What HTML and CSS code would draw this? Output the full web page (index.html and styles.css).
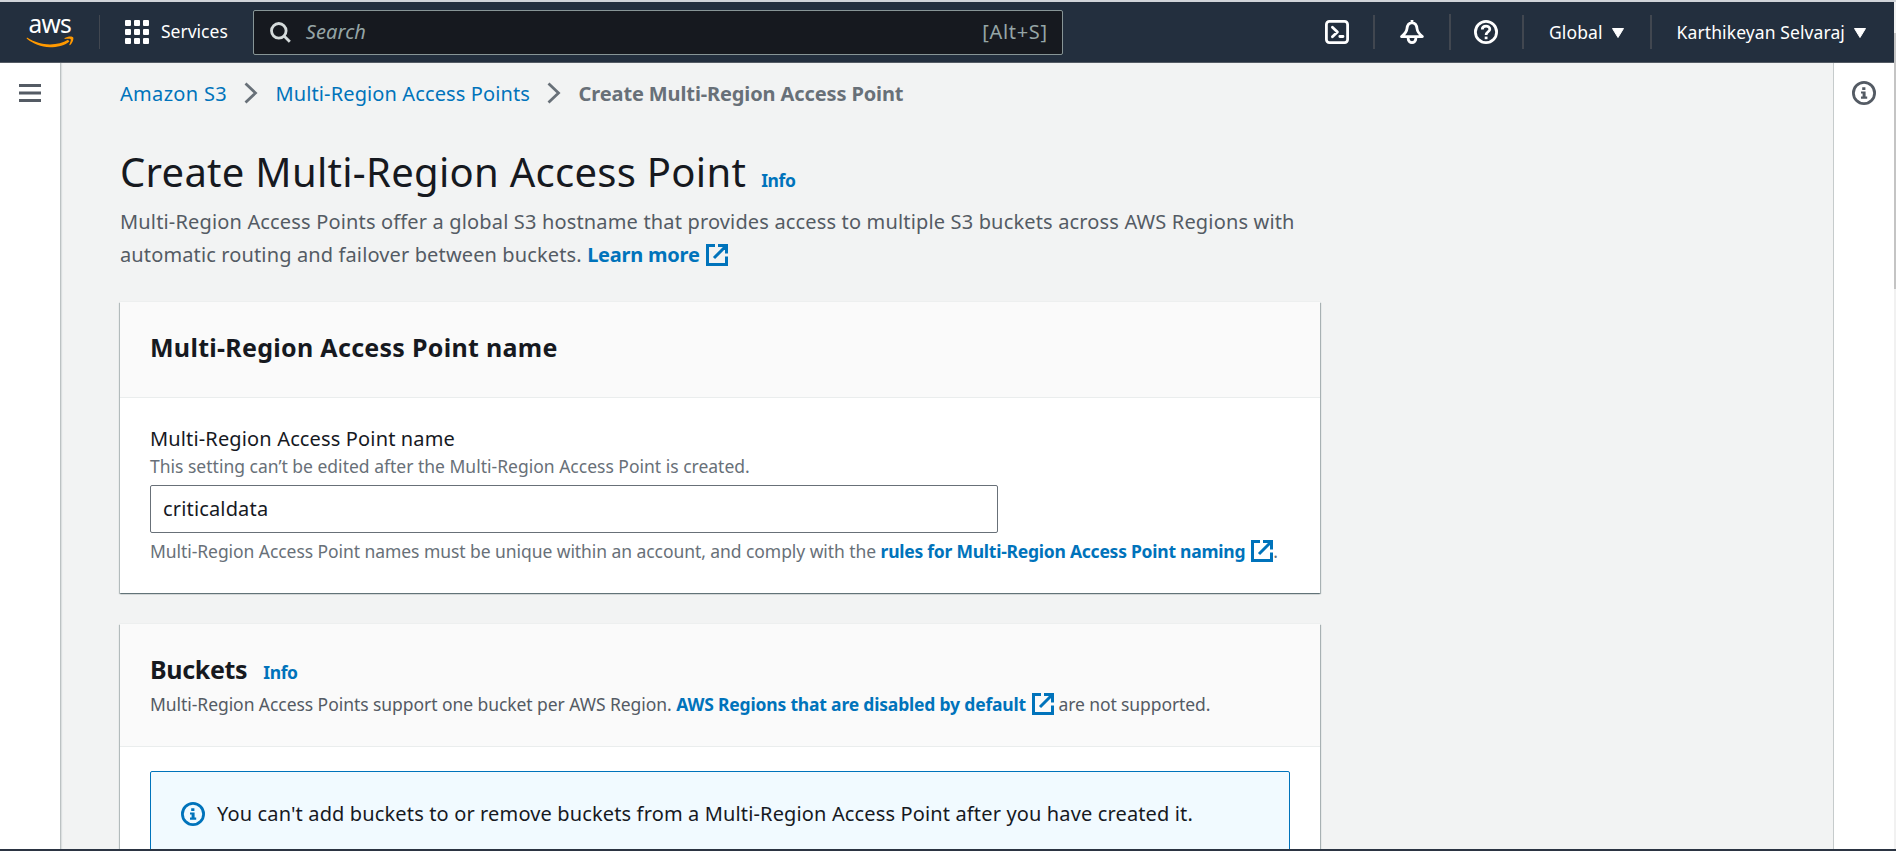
FILE: index.html
```
<!DOCTYPE html>
<html lang="en">
<head>
<meta charset="utf-8">
<title>Create Multi-Region Access Point</title>
<link rel="stylesheet" href="styles.css">
</head>
<body>
<svg class="defs" width="0" height="0">
  <symbol id="external" viewBox="0 0 22 22"><path d="M9 1.500H1.500v19h19V12.500M12 1.500h8.500V9.500M20 2L8 14" fill="none" stroke="currentColor" stroke-width="3"/></symbol>
  <symbol id="info" viewBox="0 0 24 24"><circle cx="12" cy="12" r="10.600" fill="none" stroke="currentColor" stroke-width="2.800"/><path d="M10.200 6.200h3.200v2.900h-3.200zM9 10.400h4.600v5.200h1.600v2.200H9v-2.200h1.600v-3H9z" fill="currentColor"/></symbol>
  <symbol id="chevron" viewBox="0 0 14 22"><path d="M1.500 1.500L11.500 11 1.500 20.500" fill="none" stroke="currentColor" stroke-width="2.800"/></symbol>
</svg>
<div class="window">
  <div class="app">
    <header class="topbar">
      <svg class="logo" width="50" height="44" viewBox="0 -8 50 44">
        <text class="logo-text" x="2.500" y="19">aws</text>
        <path d="M1 23.600C9 28.600 16 30.400 24 30.400c7 0 13-1.600 18-4.600l1.400 1.600C38.500 31.500 31 33.200 24 33.200 15 33.200 7 30 .6 24.600z" fill="#f90"/>
        <path d="M38.500 24.300c3-2 7.500-2.200 8.600-1 .9 1.400-.4 5.800-3.100 8l-.8-.3c1-2.200 2-5 1.500-5.800-.6-.8-3.800-.6-6.100-.2z" fill="#f90"/>
      </svg>
      <span class="rule rule-logo"></span>
      <button class="services">
        <svg width="24" height="24" viewBox="0 0 24 24" fill="#fff">
          <rect width="6" height="6" rx="1"/><rect x="9" width="6" height="6" rx="1"/><rect x="18" width="6" height="6" rx="1"/>
          <rect y="9" width="6" height="6" rx="1"/><rect x="9" y="9" width="6" height="6" rx="1"/><rect x="18" y="9" width="6" height="6" rx="1"/>
          <rect y="18" width="6" height="6" rx="1"/><rect x="9" y="18" width="6" height="6" rx="1"/><rect x="18" y="18" width="6" height="6" rx="1"/>
        </svg>
        <span>Services</span>
      </button>
      <div class="search">
        <svg width="21" height="21" viewBox="0 0 21 21" fill="none" stroke="#d5dbdb" stroke-width="2.800"><circle cx="8.800" cy="8.800" r="7.300"/><path d="M13.800 13.800l6 6"/></svg>
        <span class="search-hint">Search</span>
        <span class="search-key">[Alt+S]</span>
      </div>
      <nav class="tools">
        <svg class="tool-shell" width="24" height="24" viewBox="0 0 24 24" fill="none" stroke="#fff" stroke-width="2.800" stroke-linejoin="round" stroke-linecap="round"><rect x="1.400" y="1.400" width="21.200" height="21.200" rx="3"/><path d="M7.400 7.200l5 4.800-5 4.800M14.800 16.500h3.200" stroke-width="2.800"/></svg>
        <span class="rule"></span>
        <svg class="tool-bell" width="24" height="24" viewBox="0 0 24 24" fill="none" stroke="#fff" stroke-width="2.800" stroke-linejoin="round"><path d="M12 2.600C8.500 3 7.300 5.500 7 8.500 6.700 12 4.500 14.200 1.600 16.600h20.800C19.500 14.200 17.300 12 17 8.500 16.700 5.500 15.500 3 12 2.600zM12 0v3"/><path d="M8.200 17v1.800a3.800 3.800 0 0 0 7.600 0V17"/></svg>
        <span class="rule rule-tall"></span>
        <svg class="tool-help" width="24" height="24" viewBox="0 0 24 24" fill="none" stroke="#fff" stroke-width="2.800"><circle cx="12" cy="12" r="10.600"/><path d="M8.300 9.400c0-4.200 7.500-4.200 7.500-.2 0 2.600-3.700 2.600-3.700 5.800"/><path d="M12.100 16.600v2.600"/></svg>
        <span class="rule"></span>
        <span class="menu menu-region">Global<svg width="12" height="10" viewBox="0 0 12 10"><path d="M.5.500h11L6 9.500z" fill="#fff" stroke="#fff" stroke-linejoin="round"/></svg></span>
        <span class="rule"></span>
        <span class="menu menu-user">Karthikeyan Selvaraj<svg width="12" height="10" viewBox="0 0 12 10"><path d="M.5.500h11L6 9.500z" fill="#fff" stroke="#fff" stroke-linejoin="round"/></svg></span>
      </nav>
    </header>
    <div class="body">
      <aside class="rail rail-left">
        <svg width="22" height="18" viewBox="0 0 22 18" fill="#545b64"><rect width="22" height="3"/><rect y="7.500" width="22" height="3"/><rect y="15" width="22" height="3"/></svg>
      </aside>
      <main class="content">
        <nav class="crumbs">
          <a class="crumb-root">Amazon S3</a>
          <svg width="14" height="22"><use href="#chevron"/></svg>
          <a class="crumb-list">Multi-Region Access Points</a>
          <svg width="14" height="22"><use href="#chevron"/></svg>
          <b class="crumb-current">Create Multi-Region Access Point</b>
        </nav>
        <div class="title"><h1>Create Multi-Region Access Point</h1><a class="info-link">Info</a></div>
        <p class="intro"><span class="intro-line">Multi-Region Access Points offer a global S3 hostname that provides access to multiple S3 buckets across AWS Regions with</span><br>automatic routing and failover between buckets. <a class="strong-link learn">Learn more<svg class="ext" width="22" height="22"><use href="#external"/></svg></a></p>

        <section class="card">
          <div class="card-head"><h2 class="name-heading">Multi-Region Access Point name</h2></div>
          <div class="form">
            <label class="label" for="name">Multi-Region Access Point name</label>
            <p class="hint">This setting can’t be edited after the Multi-Region Access Point is created.</p>
            <input class="field" id="name" type="text" value="criticaldata">
            <p class="hint constraint">Multi-Region Access Point names must be unique within an account, and comply with the <a class="strong-link rules">rules for Multi-Region Access Point naming<svg class="ext" width="22" height="22"><use href="#external"/></svg></a>.</p>
          </div>
        </section>

        <section class="card card-buckets">
          <div class="card-head">
            <div class="bucket-title"><h2>Buckets</h2><a class="info-link">Info</a></div>
            <p class="subtitle">Multi-Region Access Points support one bucket per AWS Region. <a class="strong-link regions">AWS Regions that are disabled by default<svg class="ext" width="22" height="22"><use href="#external"/></svg></a> <span class="tail">are not supported.</span></p>
          </div>
          <div class="alert">
            <svg width="24" height="24"><use href="#info"/></svg>
            <span>You can't add buckets to or remove buckets from a Multi-Region Access Point after you have created it.</span>
          </div>
        </section>
      </main>
      <aside class="rail rail-right"><svg width="24" height="24"><use href="#info"/></svg></aside>
    </div>
  </div>
  <div class="scrollbar"><div class="thumb"></div></div>
</div>
</body>
</html>
```
FILE: styles.css
```
* { box-sizing: border-box; }
html, body { margin: 0; height: 100%; overflow: hidden; }
body {
  font-family: "Noto Sans", "Open Sans", sans-serif;
  font-size: 20px;
  color: #16191f;
  background: #f2f3f3;
}
h1, h2, p { margin: 0; }
svg { flex: none; }
.defs { position: absolute; }

.window {
  display: flex;
  height: 851px;
  border-top: 2px solid #d0d4d9;
  border-bottom: 2px solid #2b3442;
}
.app { flex: 1; min-width: 0; display: flex; flex-direction: column; }
.scrollbar { width: 2px; padding-top: 31px; background: #f1f1f1; }
.thumb { height: 256px; background: #c4c4c4; }

/* Top navigation */
.topbar {
  flex: none;
  display: flex;
  align-items: center;
  height: 61px;
  background: #232f3e;
  border-bottom: 1px solid #545b64;
  color: #fff;
  font-size: 17.5px;
}
.logo { margin-left: 26px; margin-bottom: 9px; }
.logo-text { font-size: 24.5px; letter-spacing: -0.7px; fill: #fff; }
.rule { width: 2px; height: 34px; background: #414750; }
.rule-tall { height: 36px; }
.rule-logo { width: 1px; margin-left: 23px; }
.services {
  display: flex;
  align-items: center;
  gap: 12px;
  margin-left: 25px;
  padding: 0;
  border: 0;
  background: none;
  color: inherit;
  font: inherit;
}
.services span, .menu { margin-top: -2px; }
.search {
  display: flex;
  align-items: center;
  width: 810px;
  height: 45px;
  margin-left: 25px;
  padding: 0 14px 0 16px;
  border: 1px solid #879596;
  border-radius: 2px;
  background: #16191f;
  color: #95a5a6;
  font-size: 20px;
}
.search-hint { margin: -2px 0 0 15px; font-style: italic; letter-spacing: 0.1px; }
.search-key { margin: -2px 0 0 auto; letter-spacing: 0.7px; }
.tools { display: flex; align-items: center; margin-left: auto; }
.tool-shell { margin-right: 24px; }
.tool-bell { margin: 0 25px; }
.tool-help { margin: 0 24px 0 23px; }
.menu { display: flex; align-items: center; gap: 9px; letter-spacing: 0.1px; }
.menu svg { margin-top: 2px; }
.menu-region { margin: 0 26px 0 25px; }
.menu-user { margin: 0 28px 0 25px; }

/* Page frame */
.body { flex: 1; min-height: 0; display: flex; overflow: hidden; }
.rail { flex: none; display: flex; align-items: flex-start; background: #fff; color: #545b64; }
.rail-left { width: 61px; padding: 21px 0 0 19px; border-right: 1px solid #bcc2c3; box-shadow: 1px 0 1px #dcdfe0; }
.rail-right { width: 61px; padding: 18px 0 0 18px; border-left: 1px solid #c6cbcc; }
.content { flex: 1; min-width: 0; padding: 15px 0 0 59px; }

/* Breadcrumbs and title */
.crumbs { display: flex; align-items: center; height: 30px; color: #687078; }
.crumbs a, .info-link, .strong-link { color: #0073bb; }
.crumbs svg { margin: 0 17.500px 0 17px; }
.crumb-root { letter-spacing: 0.31px; }
.crumb-list { letter-spacing: 0.12px; }
.crumb-current { letter-spacing: -0.12px; }
.title { display: flex; align-items: baseline; gap: 15px; height: 50px; margin-top: 39px; line-height: 50px; }
.title h1 { font-size: 40px; font-weight: 400; letter-spacing: 0.28px; }
.info-link { font-size: 17.5px; font-weight: 700; letter-spacing: -0.4px; }
.intro { margin-top: 8px; line-height: 33px; color: #545b64; letter-spacing: 0.13px; white-space: nowrap; }
.intro-line { letter-spacing: 0.16px; }
.strong-link { font-weight: 700; }
.learn { letter-spacing: -0.22px; }
.ext { margin: -5px 0 -5px 6px; vertical-align: 1px; }

/* Containers */
.card {
  width: 1200px;
  margin-top: 31px;
  background: #fff;
  box-shadow: 0 1px 1px rgba(0, 28, 36, 0.3), 1px 1px 1px rgba(0, 28, 36, 0.25), -1px 1px 1px rgba(0, 28, 36, 0.2), 0 0 1px #d5dbdb;
}
.card-head { padding: 30px 30px 31px; background: #fafafa; border-bottom: 1px solid #eaeded; height: 96px; }
.card-buckets .card-head { height: 123px; }
.card h2 { font-size: 25px; line-height: 30px; font-weight: 700; }
.name-heading { letter-spacing: 0.29px; }
.form { padding: 28px 30px 30px; }
.label { display: block; line-height: 26px; letter-spacing: 0.145px; }
.hint { margin-top: 2px; font-size: 17.5px; line-height: 24px; color: #687078; white-space: nowrap; }
.field {
  display: block;
  width: 848px;
  height: 48px;
  margin-top: 7px;
  padding: 0 12px 1px;
  border: 1px solid #687078;
  border-radius: 2px;
  background: #fff;
  color: #16191f;
  font: inherit;
  letter-spacing: 0.16px;
}
.constraint { margin-top: 6px; letter-spacing: -0.065px; }
.rules { letter-spacing: -0.24px; }
.bucket-title { display: flex; align-items: baseline; gap: 16px; height: 30px; line-height: 30px; }
.bucket-title h2 { letter-spacing: -0.33px; }
.subtitle { margin-top: 8px; font-size: 17.5px; line-height: 24px; color: #545b64; letter-spacing: -0.06px; white-space: nowrap; }
.regions { letter-spacing: -0.18px; }
.tail { letter-spacing: -0.1px; }
.alert {
  display: flex;
  align-items: center;
  gap: 12px;
  height: 130px;
  margin: 24px 30px;
  padding: 27px 30px 71px;
  border: 1px solid #0073bb;
  border-radius: 2px;
  background: #f1faff;
  line-height: 30px;
  letter-spacing: 0.14px;
}
.alert svg { color: #0073bb; }
```
